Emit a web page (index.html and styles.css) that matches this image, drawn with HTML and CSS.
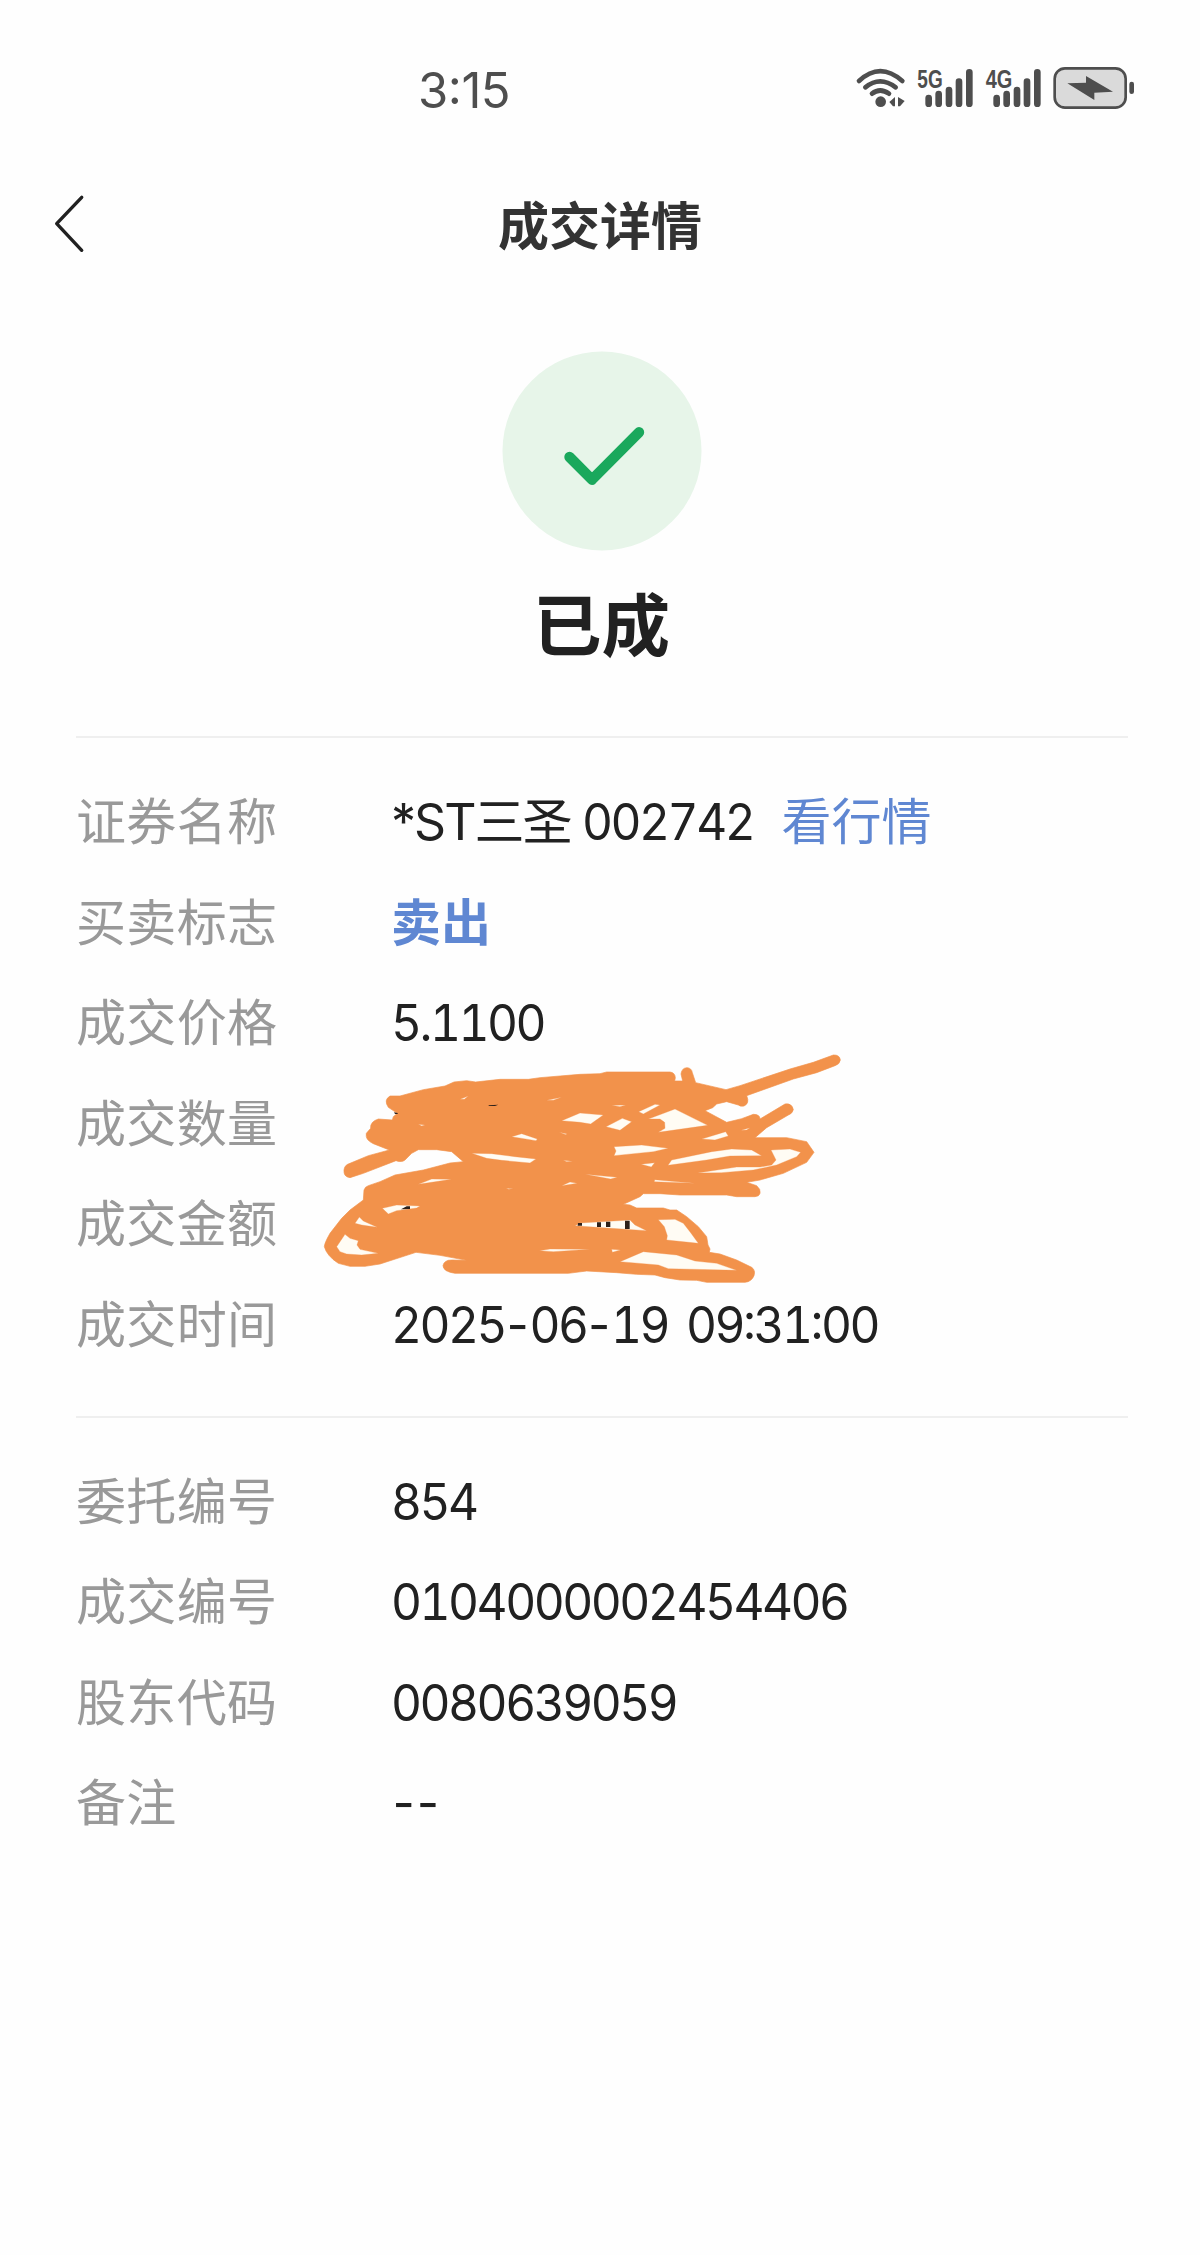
FILE: index.html
```html
<!DOCTYPE html>
<html lang="zh-CN">
<head>
<meta charset="utf-8">
<title>成交详情</title>
<link rel="stylesheet" href="styles.css">
</head>
<body>
<div class="status-bar">
  <span class="clock">3<span class="colon">:</span>15</span>
  <svg class="status-icons" viewBox="0 0 930 225">
    <g fill="none" stroke="#4e4e4e" stroke-width="14" stroke-linecap="round">
      <path d="M57 93Q120 34 187 93M76 112Q120 76 167 112M96 131Q120 112 147 131"/>
    </g>
    <circle cx="122" cy="155" r="16" fill="#4e4e4e"/>
    <path d="M148 156L165 141V169H159ZM174 141L194 153L180 169H174Z" fill="#4e4e4e"/>
    <g fill="none" stroke="#4e4e4e" stroke-width="20" stroke-linecap="round">
      <path d="M266 144V161M296 132V161M327 120V161M357 95V161M388 67V161"/>
      <path d="M470 144V161M500 132V161M531 120V161M561 95V161M592 67V161"/>
    </g>
    <g class="network" fill="#4e4e4e">
      <text x="232" y="113" textLength="76" lengthAdjust="spacingAndGlyphs">5G</text>
      <text x="437" y="113" textLength="80" lengthAdjust="spacingAndGlyphs">4G</text>
    </g>
    <rect x="644" y="55" width="213" height="118" rx="31" fill="#dadada" stroke="#4e4e4e" stroke-width="8"/>
    <path d="M682 100L738 98V78L819 125L763 128V150Z" fill="#4e4e4e"/>
    <rect x="868" y="95" width="14" height="37" rx="7" fill="#4e4e4e"/>
  </svg>
</div>
<header class="nav">
  <svg class="back" viewBox="0 0 34 60"><path d="M29.7 3.3L4.7 29.7L29.7 56.3"/></svg>
  <h1>成交详情</h1>
</header>
<section class="result">
  <svg class="check" viewBox="0 0 200 200">
    <circle cx="100" cy="100" r="99.5"/>
    <path d="M67.5 106L90 128.7L137 81.3"/>
  </svg>
  <h2>已成</h2>
</section>
<main>
  <dl class="group trade">
    <div class="row"><dt>证券名称</dt><dd><span class="name">*ST三圣 </span><span class="num">002742</span><a class="quote">看行情</a></dd></div>
    <div class="row"><dt>买卖标志</dt><dd class="sell">卖出</dd></div>
    <div class="row"><dt>成交价格</dt><dd class="num">5.1100</dd></div>
    <div class="row"><dt>成交数量</dt><dd></dd></div>
    <div class="row"><dt>成交金额</dt><dd></dd></div>
    <div class="row"><dt>成交时间</dt><dd class="num">2025<span class="dash">-</span>06<span class="dash">-</span>19 09<span class="colon">:</span>31<span class="colon">:</span>00</dd></div>
    <svg class="scribble" viewBox="0 0 1650 750">
      <path class="ink" d="M240 153L270 153L340 134L405 123L432 111L470 107L497 111L570 103H655L690 98L810 88L870 86L890 81H1080Q1095 83 1096 98L1094 108H1118L1113 87Q1115 69 1131 68Q1145 69 1147 83L1157 113L1248 134L1290 122L1440 72L1510 52L1570 30Q1589 29 1591 45Q1589 58 1575 62L1520 83L1450 102L1310 152Q1320 175 1302 183Q1290 185 1285 180L1250 170L1220 177L1208 188L1185 197L1250 232L1295 221L1330 208Q1350 208 1350 222L1425 177Q1446 174 1450 194Q1447 206 1435 210L1370 248L1335 278H1430L1490 290L1512 322L1490 352L1420 385L1350 405L1310 412L1340 422Q1353 433 1350 445Q1347 455 1335 455H1280L1250 450H1110L1050 446H1000L990 455L940 478L960 480L980 489H1060L1080 495H1100L1130 515L1165 545L1190 575L1194 600L1200 612L1198 622L1230 627L1280 645L1325 667Q1337 675 1332 692Q1325 710 1305 712H1190L1160 706L1110 705L1065 698L1035 690L980 688L920 683L830 678L775 685H435Q400 680 399 662Q402 645 425 645L470 646L390 631L318 622L210 657L165 664H120L85 655Q50 632 43 605Q43 595 60 565L95 520L120 495L160 465L162 435Q165 425 175 422L210 410L255 390L340 375L420 354L460 350L425 320L380 314H325L305 325L285 345Q275 353 258 347L160 385L120 398Q100 395 102 375Q103 360 120 355L175 332L238 315L190 296Q165 285 169 265L182 250Q180 230 205 222L247 225L250 215L262 205L235 187Q220 165 240 153Z"/>
      <g class="gap">
        <path d="M755 227L810 204L880 210L842 237L810 232ZM888 245L937 220L965 230L930 256ZM986 200L1035 178L1050 180L1000 207ZM1015 222L1095 192L1193 241L1045 262L1065 250L1064 232L1050 222Z"/>
        <path d="M1175 282L1247 260L1255 273L1215 285ZM1293 256L1320 248L1310 255ZM605 275L635 266L682 282L678 287ZM485 325L545 326L615 335L678 342L660 354L575 346L530 340Z"/>
        <path d="M912 305L995 300L1075 310L1030 320L912 332L918 318ZM1085 345L1205 320L1265 312L1325 315L1355 332L1260 333L1190 345L1074 361ZM1383 315L1440 312L1472 322L1460 335L1400 360L1330 375L1235 383L1162 384L1280 366L1350 366L1385 360L1398 345Z"/>
        <path d="M993 358L1034 353L1024 366ZM1034 404L1155 415L1033 410ZM825 388L922 397L902 402ZM325 418L365 402L425 403L365 412ZM755 422L780 411L802 415Z"/>
        <path d="M217 490L260 480L330 483L320 489L260 497L235 507ZM148 516L160 528L202 547L155 540L135 535ZM105 568L120 580L145 587L141 600L150 613L205 625L155 630L110 627L90 620L80 605Z"/>
        <path d="M795 542L810 534L960 525L975 540L1010 557L860 547ZM688 617L720 612L840 613L730 620ZM905 613L932 615L907 622ZM1000 620L1100 630L1155 648L1220 655L1280 676L1075 671L1045 660L930 650Z"/>
        <path d="M1045 524L1095 523L1120 535L1142 563L1165 595L1070 585L1072 572L1063 545ZM450 163L475 153L463 163ZM325 238L345 240L335 243ZM710 166L755 157L730 166ZM905 181L947 180L930 185ZM748 262L770 266L768 269ZM760 346L788 349L770 350ZM588 430L610 431L596 433Z"/>
      </g>
      <path class="digits" d="M804 534H816V542H803ZM861 532H873V546H861ZM888 530H901V546H888ZM945 527H959V552H945ZM273 493L290 484H300V492ZM252 202L263 204V207H255ZM535 181L565 179L555 183H537Z"/>
    </svg>
  </dl>
  <dl class="group">
    <div class="row"><dt>委托编号</dt><dd class="num">854</dd></div>
    <div class="row"><dt>成交编号</dt><dd class="num">0104000002454406</dd></div>
    <div class="row"><dt>股东代码</dt><dd class="num">0080639059</dd></div>
    <div class="row"><dt>备注</dt><dd class="num"><span class="dash">-</span><span class="dash">-</span></dd></div>
  </dl>
</main>
</body>
</html>
```
FILE: styles.css
```css
* { box-sizing: border-box; margin: 0; padding: 0; }
body {
  background: #fefefe;
  color: #212121;
  font-family: "Noto Sans CJK SC", sans-serif;
  font-size: 50px;
  min-height: 2255px;
}
.status-bar {
  display: flex;
  justify-content: space-between;
  align-items: flex-start;
  height: 160px;
  padding: 50px 50px 0 418px;
}
.clock {
  font: 49px/82px Inter, sans-serif;
  letter-spacing: -.5px;
  color: #4e4e4e;
}
.colon { vertical-align: 4px; line-height: 0; }
.status-icons { width: 310px; height: 75px; }
.network { font: bold 77px "Liberation Sans", sans-serif; }
.nav {
  display: grid;
  grid-template-columns: 148px 1fr 148px;
  align-items: start;
  height: 130px;
}
.back {
  width: 34px;
  height: 60px;
  margin: 34px 0 0 52px;
  fill: none;
  stroke: #212121;
  stroke-width: 3.4;
  stroke-linecap: round;
  stroke-linejoin: round;
}
h1 {
  font-size: 51px;
  line-height: 126px;
  text-align: center;
  color: #333;
}
.result {
  display: flex;
  flex-direction: column;
  align-items: center;
  height: 446px;
  padding-top: 61px;
}
.check { width: 200px; height: 200px; margin-left: 3px; }
.check circle { fill: #e7f5e9; }
.check path {
  fill: none;
  stroke: #1aa85c;
  stroke-width: 10.4;
  stroke-linecap: round;
  stroke-linejoin: round;
}
h2 { font-size: 68.5px; line-height: 100px; margin: 21px 0 0 3px; }
main { padding: 0 72px 0 76px; }
.group {
  position: relative;
  border-top: 2px solid #efefef;
  padding: 34px 0 40px;
}
.row {
  display: grid;
  grid-template-columns: 315px 1fr;
  height: 100.6px;
  line-height: 93px;
}
dt { color: #999; letter-spacing: .35px; }
dd { white-space: pre; }
.num {
  display: inline-block;
  font-family: Inter, "Noto Sans CJK SC", sans-serif;
  font-feature-settings: "tnum";
  letter-spacing: -2.6px;
  word-spacing: 8px;
  transform: scaleX(.957);
  transform-origin: left;
}
dd.num { line-height: 101.5px; }
.dash { margin-left: -3px; letter-spacing: -4px; }
.name {
  font-family: Inter, "Noto Sans CJK SC", sans-serif;
  letter-spacing: -2px;
}
.quote { color: #5f87d2; margin-left: 20px; }
.sell { color: #5f87d2; font-weight: bold; }
.scribble {
  position: absolute;
  left: 234px;
  top: 307px;
  width: 550px;
  height: 250px;
}
.ink { fill: #f2924b; stroke: #f2924b; stroke-width: 2; }
.gap { fill: #fffcf4; stroke: #f2924b; stroke-width: 1; }
.digits { fill: #2d211b; }
```
